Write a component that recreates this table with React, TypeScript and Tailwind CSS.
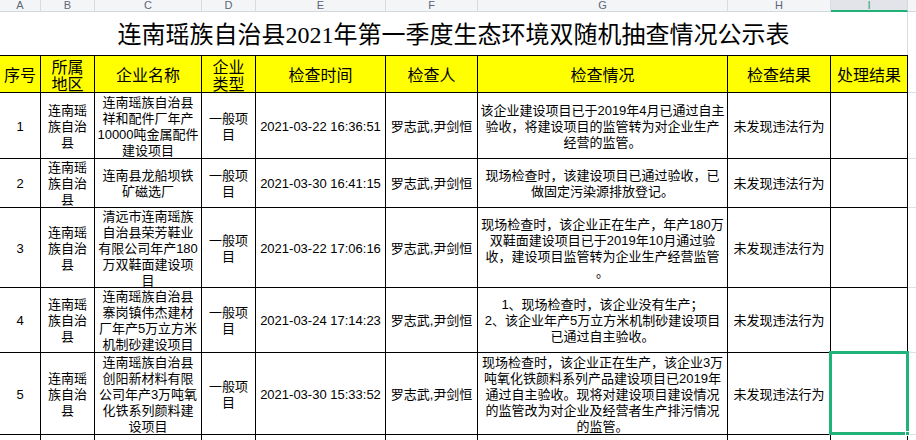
import React from "react";

const W = [
  "w-[41px]",
  "w-[54px]",
  "w-[107px]",
  "w-[54px]",
  "w-[130px]",
  "w-[92px]",
  "w-[250px]",
  "w-[103px]",
  "w-[77px]",
];

const LETTERS = ["A", "B", "C", "D", "E", "F", "G", "H", "I"];

type Row = {
  h: string;
  no: string;
  name: string[];
  time: string;
  detail: string[];
  selected?: boolean;
};

const rows: Row[] = [
  {
    h: "h-[66px]",
    no: "1",
    name: ["连南瑶族自治县", "祥和配件厂年产", "10000吨金属配件", "建设项目"],
    time: "2021-03-22 16:36:51",
    detail: [
      "该企业建设项目已于2019年4月已通过自主",
      "验收，将建设项目的监管转为对企业生产",
      "经营的监管。",
    ],
  },
  {
    h: "h-[49px]",
    no: "2",
    name: ["连南县龙船坝铁", "矿磁选厂"],
    time: "2021-03-30 16:41:15",
    detail: ["现场检查时，该建设项目已通过验收，已", "做固定污染源排放登记。"],
  },
  {
    h: "h-[80px]",
    no: "3",
    name: ["清远市连南瑶族", "自治县荣芳鞋业", "有限公司年产180", "万双鞋面建设项", "目"],
    time: "2021-03-22 17:06:16",
    detail: [
      "现场检查时，该企业正在生产，年产180万",
      "双鞋面建设项目已于2019年10月通过验",
      "收，建设项目监管转为企业生产经营监管",
      "。",
    ],
  },
  {
    h: "h-[65px]",
    no: "4",
    name: ["连南瑶族自治县", "寨岗镇伟杰建材", "厂年产5万立方米", "机制砂建设项目"],
    time: "2021-03-24 17:14:23",
    detail: [
      "1、现场检查时，该企业没有生产；",
      "2、该企业年产5万立方米机制砂建设项目",
      "已通过自主验收。",
    ],
  },
  {
    h: "h-[82px]",
    no: "5",
    name: ["连南瑶族自治县", "创阳新材料有限", "公司年产3万吨氧", "化铁系列颜料建", "设项目"],
    time: "2021-03-30 15:33:52",
    detail: [
      "现场检查时，该企业正在生产，该企业3万",
      "吨氧化铁颜料系列产品建设项目已2019年",
      "通过自主验收。现将对建设项目建设情况",
      "的监管改为对企业及经营者生产排污情况",
      "的监管。",
    ],
    selected: true,
  },
];

function Lines({ lines }: { lines: string[] }) {
  return (
    <div className="flex flex-col items-center leading-[16px] whitespace-nowrap pt-[2px]">
      {lines.map((l, i) => (
        <span key={i}>{l}</span>
      ))}
    </div>
  );
}

const bodyCell =
  "shrink-0 border-r border-b border-black flex items-center justify-center text-center overflow-visible";

export default function App() {
  return (
    <div className="w-[916px] h-[440px] overflow-hidden bg-white text-black font-['Liberation_Sans','Noto_Sans_CJK_SC',sans-serif]">
      {/* column letter bar */}
      <div className="flex h-[12px] bg-[#f4f5f7]">
        {LETTERS.map((l, i) => (
          <div
            key={l}
            className={`${W[i]} shrink-0 h-[12px] flex items-start justify-center text-[11px] leading-[11px] ${
              i === 8
                ? "bg-[#e2e4e9] text-[#1fa671] border-b-2 border-b-[#21b27a] border-r border-r-[#d3d7de]"
                : "text-[#5d6677] border-r border-r-[#d8dce2] border-b border-b-[#d3d7de]"
            }`}
          >
            {l}
          </div>
        ))}
        <div className="flex-1 border-b border-[#d3d7de]" />
      </div>

      {/* title row */}
      <div className="flex h-[43px]">
        <div className="w-[908px] shrink-0 border-r border-[#d8dde5] flex items-center justify-center pt-[3px] text-[24px] leading-[28px] font-['Liberation_Serif','Noto_Sans_CJK_SC',serif] whitespace-nowrap">
          连南瑶族自治县2021年第一季度生态环境双随机抽查情况公示表
        </div>
        <div className="flex-1" />
      </div>

      {/* header row */}
      <div className="flex h-[38px]">
        {[
          ["序号"],
          ["所属", "地区"],
          ["企业名称"],
          ["企业", "类型"],
          ["检查时间"],
          ["检查人"],
          ["检查情况"],
          ["检查结果"],
          ["处理结果"],
        ].map((t, i) => (
          <div
            key={i}
            className={`${W[i]} shrink-0 bg-[#ffff00] border-t border-b border-r border-black flex items-center justify-center text-[16px] leading-[17px] pt-[3px] whitespace-nowrap`}
          >
            <div className="flex flex-col items-center">
              {t.map((x, j) => (
                <span key={j}>{x}</span>
              ))}
            </div>
          </div>
        ))}
        <div className="flex-1 border-b border-[#dde2e9]" />
      </div>

      {/* body rows */}
      {rows.map((r) => (
        <div key={r.no} className={`flex ${r.h} text-[13px]`}>
          <div className={`${W[0]} ${bodyCell}`}>
            <span className="pt-[2px]">{r.no}</span>
          </div>
          <div className={`${W[1]} ${bodyCell}`}>
            <Lines lines={["连南瑶", "族自治", "县"]} />
          </div>
          <div className={`${W[2]} ${bodyCell}`}>
            <Lines lines={r.name} />
          </div>
          <div className={`${W[3]} ${bodyCell}`}>
            <Lines lines={["一般项", "目"]} />
          </div>
          <div className={`${W[4]} ${bodyCell}`}>
            <span className="pt-[2px] whitespace-nowrap">{r.time}</span>
          </div>
          <div className={`${W[5]} ${bodyCell}`}>
            <span className="pt-[2px] whitespace-nowrap">罗志武,尹剑恒</span>
          </div>
          <div className={`${W[6]} ${bodyCell}`}>
            <Lines lines={r.detail} />
          </div>
          <div className={`${W[7]} ${bodyCell}`}>
            <span className="pt-[2px] whitespace-nowrap">未发现违法行为</span>
          </div>
          <div className={`${W[8]} ${bodyCell} relative`}>
            {r.selected && (
              <div className="absolute left-[-2px] top-[-2px] w-[80px] h-[84px] border-[3px] border-[#21b27a]">
                <div className="absolute right-[-4px] bottom-[-4px] w-[5px] h-[5px] bg-[#21b27a] border border-white" />
              </div>
            )}
          </div>
          <div className="flex-1 border-b border-[#dde2e9]" />
        </div>
      ))}

      {/* partial next row */}
      <div className="flex h-[20px]">
        {W.map((w, i) => (
          <div key={i} className={`${w} shrink-0 border-r border-black`} />
        ))}
        <div className="flex-1" />
      </div>
    </div>
  );
}
